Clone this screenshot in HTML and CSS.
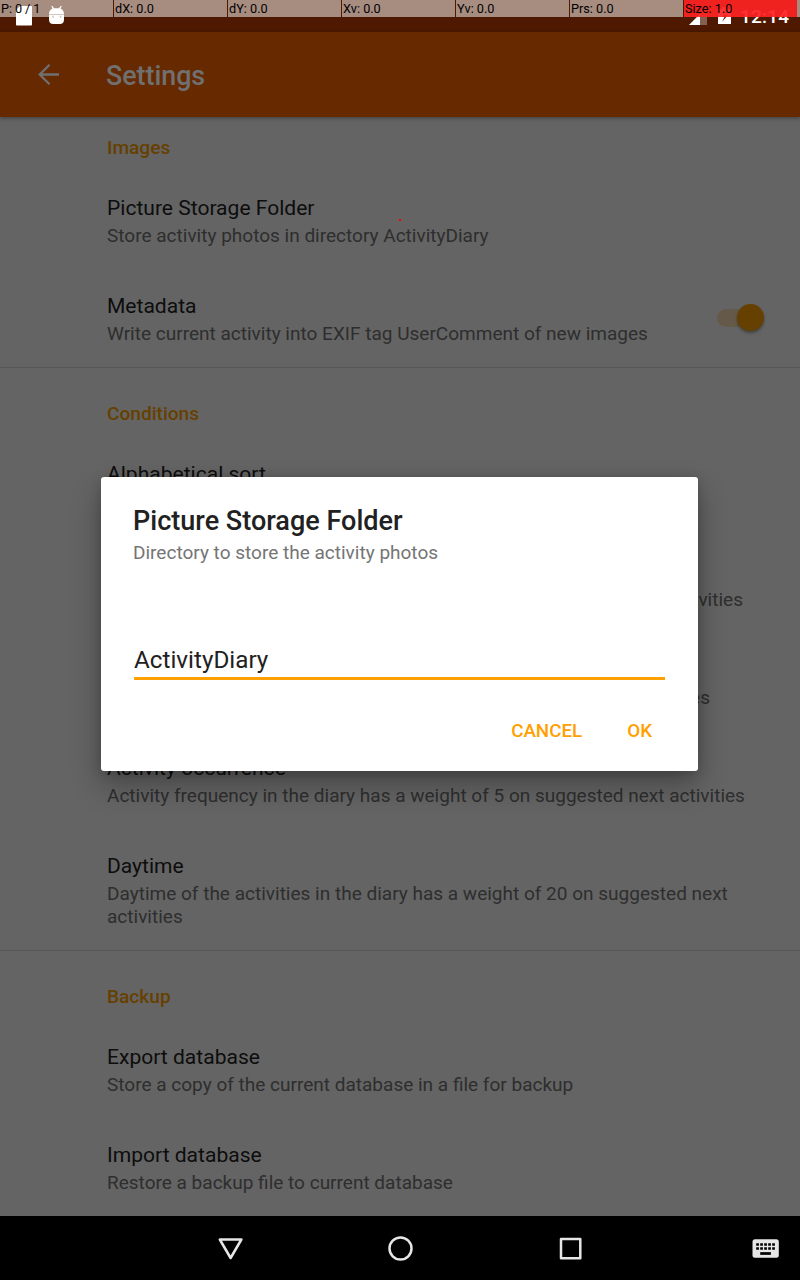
FILE: index.html
```html
<!DOCTYPE html>
<html lang="en">
<head>
<meta charset="utf-8">
<title>Settings</title>
<link rel="stylesheet" href="styles.css">
</head>
<body>
<div class="screen">
  <div class="statusbar">
    <svg class="notif" width="80" height="32" viewBox="0 0 80 32">
      <path fill="#fff" d="M20 6h11q1 0 1 1v17.500q0 1-1 1H17q-1 0-1-1V10z"/>
      <path fill="#fff" d="M49 14.500h15v5q0 4.500-4.500 4.500h-6q-4.500 0-4.500-4.500zM49 14q0-4 3.500-5.500L51.300 6.200l.8-.5 2 2.500h4.800l2-2.500.8.5L60.500 8.500q3.500 1.500 3.500 5.500z"/>
      <circle cx="53" cy="16.500" r=".9" fill="#a68c80"/><circle cx="60.500" cy="16.500" r=".9" fill="#a68c80"/>
    </svg>
    <svg class="signal" width="44" height="32" viewBox="0 0 44 32">
      <path fill="#83604f" d="M19 7v18H1z"/><path fill="#fff" d="M12 14v11H1z"/>
      <path fill="#fff" d="M30 9h4V7h5v2h4v15H30z"/>
      <path fill="#4e1900" d="M39 11l-5 6h2.500l-2.500 5 6-7h-3z"/>
    </svg>
    <span class="clock">12:14</span>
  </div>
  <div class="pointer">
    <span>P: 0 / 1</span><span>dX: 0.0</span><span>dY: 0.0</span><span>Xv: 0.0</span><span>Yv: 0.0</span><span>Prs: 0.0</span><span class="size">Size: 1.0</span>
  </div>
  <header class="appbar">
    <svg class="back" width="24" height="24" viewBox="0 0 24 24"><path fill="none" stroke="#707070" stroke-width="2.300" d="M22 11.500H3M12.500 1.700L2.700 11.500l9.800 9.800"/></svg>
    <h1>Settings</h1>
  </header>
  <main class="list">
    <section>
      <h2>Images</h2>
      <div class="item"><h3>Picture Storage Folder</h3><p>Store activity photos in directory ActivityDiary</p></div>
      <div class="item switchable">
        <div><h3>Metadata</h3><p>Write current activity into EXIF tag UserComment of new images</p></div>
        <span class="switch"><i></i></span>
      </div>
    </section>
    <section class="ruled">
      <h2>Conditions</h2>
      <div class="item"><h3>Alphabetical sort</h3></div>
      <div class="item"><p class="tail wide">next activities</p></div>
      <div class="item"><p class="tail">next activities</p></div>
      <div class="item"><h3>Activity occurrence</h3><p>Activity frequency in the diary has a weight of 5 on suggested next activities</p></div>
      <div class="item tall"><h3>Daytime</h3><p>Daytime of the activities in the diary has a weight of 20 on suggested next activities</p></div>
    </section>
    <section class="ruled">
      <h2>Backup</h2>
      <div class="item"><h3>Export database</h3><p>Store a copy of the current database in a file for backup</p></div>
      <div class="item"><h3>Import database</h3><p>Restore a backup file to current database</p></div>
    </section>
  </main>
  <nav class="navbar">
    <svg width="800" height="64" viewBox="0 0 800 64">
      <g fill="none" stroke="#e6e6e6" stroke-width="2.500" stroke-linejoin="round">
        <path d="M219.800 23.500h21.600L230.600 42z"/>
        <circle cx="400.500" cy="32.500" r="11"/>
        <path d="M561 23h19.300v19.300H561z"/>
      </g>
      <rect x="752.500" y="23.200" width="26.300" height="18.500" rx="2.500" fill="#e6e6e6"/>
      <path stroke="#000" stroke-width="2.700" stroke-dasharray="2.700 1.300" d="M756.200 28.500h19M756.200 32.500h19"/>
      <path stroke="#000" stroke-width="2.700" d="M760.200 37.500h10.700"/>
    </svg>
  </nav>
  <div class="dialog">
    <h2>Picture Storage Folder</h2>
    <p>Directory to store the activity photos</p>
    <div class="field">ActivityDiary</div>
    <div class="actions"><span>CANCEL</span><span>OK</span></div>
  </div>
  <i class="touch"></i>
</div>
</body>
</html>
```
FILE: styles.css
```css
* { box-sizing: border-box; margin: 0; padding: 0; }
body { font-family: Roboto, "Noto Sans", sans-serif; background: #646464; }
.screen { position: relative; width: 800px; height: 1280px; overflow: hidden; display: flex; flex-direction: column; }
.statusbar { height: 32px; flex: none; background: #4e1900; display: flex; }
.signal { margin-left: 608px; }
.clock { margin-left: 8px; color: #fff; font-size: 19px; font-weight: 500; line-height: 33px; letter-spacing: .2px; }
.pointer { position: absolute; left: 0; top: 0; width: 800px; height: 17px; display: grid; grid-template-columns: repeat(6, 113px) 1fr; gap: 1px; font-size: 12.700px; line-height: 17px; color: #000; }
.pointer span { background: rgba(255,255,255,.5); padding-left: 1px; white-space: pre; }
.pointer span:first-child { letter-spacing: -.1px; }
.pointer .size { background: linear-gradient(90deg, rgba(252,35,35,.93) 113px, rgba(255,255,255,.5) 113px); }
.appbar { height: 85px; flex: none; background: #662900; display: flex; align-items: center; padding-left: 37px; box-shadow: 0 1px 4px rgba(0,0,0,.4); position: relative; }
.appbar h1 { margin: 3px 0 0 45px; font-size: 26.800px; line-height: 32px; font-weight: 500; color: #707070; }
.list { flex: 1; min-height: 0; overflow: hidden; }
.list h2 { height: 56px; padding: 19px 0 0 107px; font-size: 19.100px; line-height: 23px; font-weight: 500; color: #664000; }
.list .ruled { border-top: 1px solid #575757; }
.list .ruled h2 { height: 71px; padding-top: 34px; }
.item { height: 98px; padding: 22px 0 0 107px; }
.item:last-child { height: 96px; }
.item.tall { height: 119px; }
.item h3 { font-size: 21.050px; line-height: 25px; font-weight: 400; color: #0d0d0d; }
.item p { width: 660px; margin-top: 4px; font-size: 19.030px; line-height: 23px; color: #2e2e2e; }
.item p.tail { width: 603px; margin-top: 29px; text-align: right; }
.item p.wide { width: 636px; }
.switchable { display: flex; justify-content: space-between; padding-right: 36.500px; }
.switchable div { width: 580px; }
.switch { width: 46.500px; height: 18px; margin-top: 15.500px; border-radius: 9px; background: linear-gradient(90deg, #655a4a 75%, transparent 75%); display: flex; justify-content: flex-end; align-items: center; }
.switch i { width: 27px; height: 27px; flex: none; border-radius: 50%; background: #664000; box-shadow: 0 2px 3px rgba(0,0,0,.35); }
.navbar { height: 64px; flex: none; background: #000; position: relative; }
.navbar svg { display: block; }
.dialog { position: absolute; left: 101px; top: 477px; width: 597px; height: 294px; padding: 28px 33px 0 32px; border-radius: 3px; background: #fff; box-shadow: 0 14px 30px rgba(0,0,0,.3), 0 2px 12px rgba(0,0,0,.16); }
.dialog h2 { font-size: 27.050px; line-height: 32px; font-weight: 500; color: #212121; }
.dialog p { margin-top: 4px; font-size: 19.020px; line-height: 23px; color: #757575; }
.field { margin: 80px 0 0 1px; height: 36px; font-size: 24.250px; line-height: 32px; color: #212121; border-bottom: 3px solid #ffa000; }
.actions { display: flex; justify-content: flex-end; margin-top: 39px; padding-right: 13px; gap: 45px; font-size: 18.800px; line-height: 24px; font-weight: 500; color: #ffa000; }
.touch { position: absolute; left: 399px; top: 219px; width: 2px; height: 2px; background: #f00; }
```
